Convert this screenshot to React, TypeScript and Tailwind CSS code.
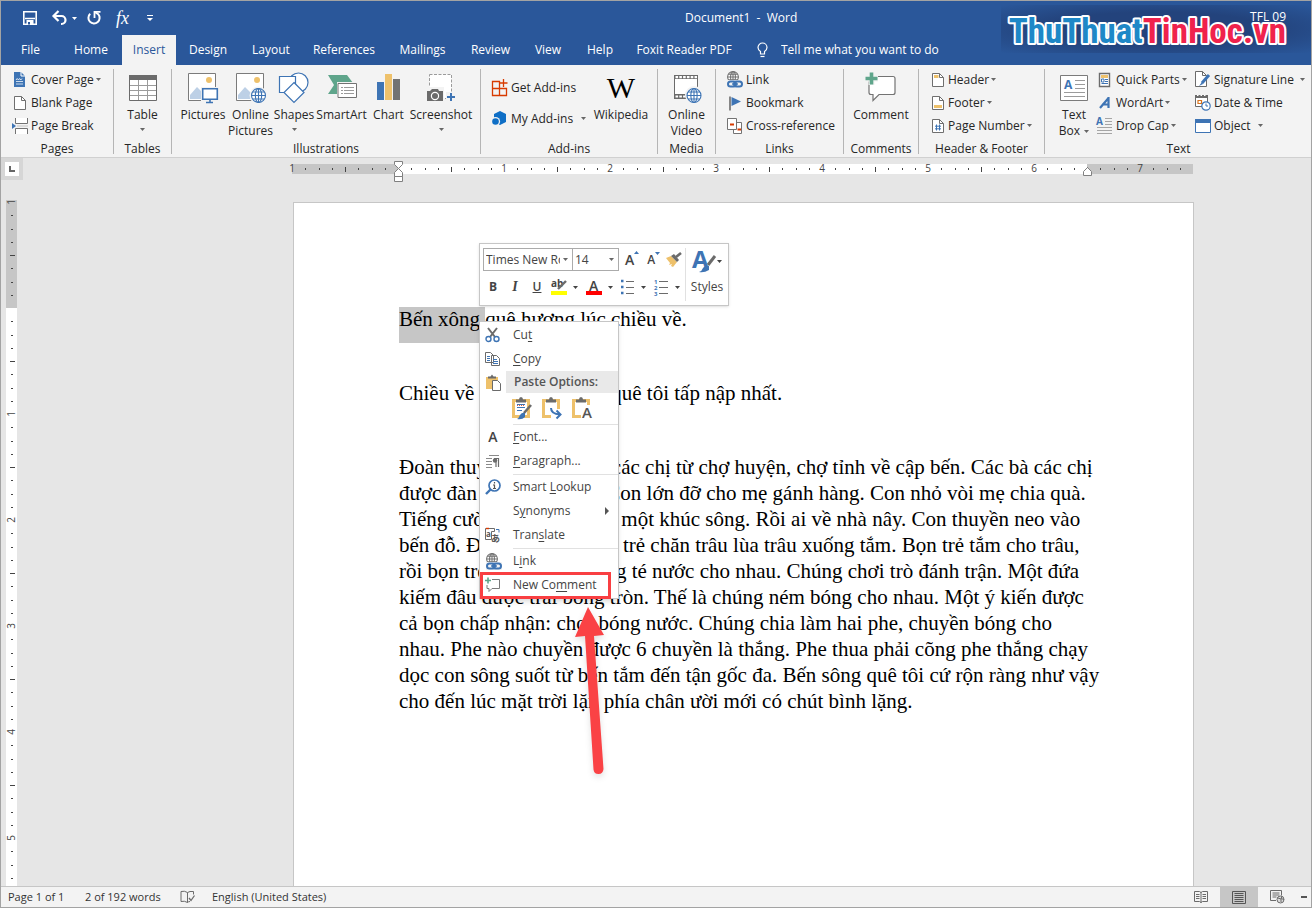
import React from "react";

type IconProps = {
    children: React.ReactNode,
    w: number,
    h: number,
    className?: string
}

const Icon: React.FC<IconProps> = ({children, w, h, className}) => (
    <svg width={w} height={h} viewBox={`0 0 ${w} ${h}`} fill="none" className={"shrink-0 overflow-visible " + (className ?? "")} aria-hidden="true">
        {children}
    </svg>
)

const Caret: React.FC<{className?: string}> = ({className}) => (
    <Icon w={5} h={3} className={className}><path d="M0 0h5L2.5 3z" fill="currentColor"/></Icon>
)

const Globe: React.FC<{x: number, y: number, r: number, color: string}> = ({x, y, r, color}) => (
    <g stroke={color} strokeWidth="1.1">
        <circle cx={x} cy={y} r={r} fill="#fff"/>
        <ellipse cx={x} cy={y} rx={r * 0.45} ry={r}/>
        <path d={`M${x - r} ${y}h${2 * r}M${x} ${y - r}v${2 * r}M${x - r * 0.85} ${y - r * 0.5}h${r * 1.7}M${x - r * 0.85} ${y + r * 0.5}h${r * 1.7}`}/>
    </g>
)

const PageShape: React.FC<{children?: React.ReactNode}> = ({children}) => (
    <Icon w={14} h={16}>
        <path d="M1.500 1.500h7l4 4v9h-11z" fill="#fff" stroke="#6f6f6f"/>
        <path d="M8.500 1.500v4h4" stroke="#6f6f6f"/>
        {children}
    </Icon>
)

const ChainGlobe = () => (
    <Icon w={17} h={17}>
        <Globe x={7} y={6} r={5.4} color="#737373"/>
        <rect x="1" y="9" width="16" height="8" fill="#f3f3f3"/>
        <rect x="2" y="10.5" width="8" height="5" rx="2.5" stroke="#3e74b4" strokeWidth="2"/>
        <rect x="8" y="10.5" width="8" height="5" rx="2.5" stroke="#3e74b4" strokeWidth="2"/>
        <path d="M6 13h6" stroke="#3e74b4" strokeWidth="1.4"/>
    </Icon>
)

const icons = {
    cover: (
        <Icon w={14} h={16}>
            <path d="M1 0h7l4 4v11H1z" fill="#3e74b4"/>
            <path d="M8 0v4h4" stroke="#fff"/>
            <path d="M3 8l1.200-1.500 1.200 1.500 1.200-1.500 1.200 1.500L9 6.500" stroke="#fff" strokeWidth=".8"/>
            <path d="M3 9.500h7M3 12h7" stroke="#dbe6f3" strokeWidth=".9"/>
        </Icon>
    ),
    blank: <PageShape/>,
    pageBreak: (
        <Icon w={16} h={16}>
            <path d="M3.500 0v5.500h12V0M3.500 16v-5.500h12V16" fill="#fff" stroke="#737373"/>
            <path d="M0 5l4 3-4 3z" fill="#3e74b4"/>
            <path d="M5 8h11" stroke="#c4c4c4"/>
        </Icon>
    ),
    table: (
        <Icon w={28} h={26}>
            <path d="M.5.5h27v25H.5z" fill="#fff" stroke="#6b6b6b"/>
            <path d="M0 0h28v5H0z" fill="#6b6b6b"/>
            <path d="M9.500 5v20M18.500 5v20M1 10.500h26M1 15.500h26M1 20.500h26" stroke="#9b9b9b"/>
        </Icon>
    ),
    pictures: (
        <Icon w={32} h={32}>
            <path d="M1.500 1.500h27v27h-27z" fill="#fff" stroke="#7b7b7b"/>
            <circle cx="22" cy="8" r="3" fill="#eec16b"/>
            <path d="M3 27V23l7-8 6 6v6z" fill="#bdd0e6"/>
            <path d="M14 15h18v17H14z" fill="#f3f3f3"/>
            <path d="M15.700 16.700h14.600v10.600H15.700z" fill="#fff" stroke="#3e74b4" strokeWidth="1.600"/>
            <path d="M23 28v2M19 30.500h7" stroke="#3e74b4" strokeWidth="1.600"/>
        </Icon>
    ),
    onlinePictures: (
        <Icon w={32} h={32}>
            <path d="M1.500 1.500h27v27h-27z" fill="#fff" stroke="#7b7b7b"/>
            <circle cx="22" cy="8" r="3" fill="#eec16b"/>
            <path d="M3 27V23l7-8 6 6v6z" fill="#bdd0e6"/>
            <circle cx="23.500" cy="23.500" r="9" fill="#f3f3f3"/>
            <Globe x={23.5} y={23.5} r={7} color="#3e74b4"/>
        </Icon>
    ),
    shapes: (
        <Icon w={32} h={32}>
            <circle cx="20.500" cy="10.500" r="9.500" fill="#fff" stroke="#3e74b4" strokeWidth="1.200"/>
            <path d="M1.500 4.500h16v16h-16z" fill="#fff" stroke="#3e74b4" strokeWidth="1.200"/>
            <path d="M16 10.500L26 20.500 16 30.500 6 20.500z" fill="#fff" stroke="#3e74b4" strokeWidth="1.200"/>
        </Icon>
    ),
    smartArt: (
        <Icon w={32} h={32}>
            <path d="M2 3h19l6 8h-15v11H2l6-9z" fill="#5fa58b"/>
            <path d="M11 10h21v18H11z" fill="#f3f3f3"/>
            <path d="M12 11.500h18.500v14H12z" fill="#fff" stroke="#737373"/>
            <path d="M15 15.500h2M15 18.500h2M15 21.500h2M18 15.500h10M18 18.500h10M18 21.500h10" stroke="#9a9a9a"/>
        </Icon>
    ),
    chart: (
        <Icon w={26} h={32}>
            <path d="M1 10h7v18H1z" fill="#3e74b4"/>
            <path d="M9 2h7v26H9z" fill="#eec16b"/>
            <path d="M17 7h7v21h-7z" fill="#737373"/>
        </Icon>
    ),
    screenshot: (
        <Icon w={32} h={32}>
            <path d="M4.500 2.500h22v24h-22z" fill="#fff" stroke="#9b9b9b" strokeDasharray="3 1.500"/>
            <path d="M1 15h18v15H1z" fill="#f3f3f3"/>
            <path d="M2 19h3l2-2h6l1 2h4v10H2z" fill="#6b6b6b"/>
            <circle cx="10" cy="24" r="3.600" stroke="#fff" strokeWidth="1.200"/>
            <path d="M21 20h10v10H21z" fill="#f3f3f3"/>
            <path d="M26 21v8M22 25h8" stroke="#3e74b4" strokeWidth="2"/>
        </Icon>
    ),
    getAddins: (
        <Icon w={17} h={17}>
            <path d="M1.500 2.500h7v14h-7zM1.500 9.500h14v7h-14z" stroke="#d83b01" strokeWidth="1.300"/>
            <path d="M12.500 0v8M8.500 4h8" stroke="#d83b01" strokeWidth="1.300"/>
        </Icon>
    ),
    myAddins: (
        <Icon w={17} h={17}>
            <path d="M9 1l6 3v8l-6 3-6-3V4z" fill="#0f6fc6"/>
            <circle cx="4.500" cy="11.500" r="4.600" fill="#f3f3f3"/>
            <circle cx="4.500" cy="11.500" r="3.300" fill="#0f6fc6"/>
        </Icon>
    ),
    video: (
        <Icon w={32} h={32}>
            <path d="M3.500 3.500h23v23h-23z" fill="#fff" stroke="#6b6b6b"/>
            <path d="M3 3h24v4H3zM3 22h24v5H3z" fill="#6b6b6b"/>
            <path d="M4.500 5.200h21.500M4.500 24.500h21.500" stroke="#fff" strokeWidth="2.200" strokeDasharray="2.600 1.200"/>
            <circle cx="23" cy="23" r="9" fill="#f3f3f3"/>
            <Globe x={23} y={23.5} r={7} color="#3e74b4"/>
        </Icon>
    ),
    link: <ChainGlobe/>,
    bookmark: (
        <Icon w={17} h={16}>
            <path d="M4 1.500v14" stroke="#6b6b6b" strokeWidth="1.600"/>
            <path d="M5.500 2L15 6.500 5.500 11z" fill="#3e74b4"/>
        </Icon>
    ),
    crossRef: (
        <Icon w={17} h={16}>
            <path d="M1.500.5h9v11h-9zM7.500 4.500h8v11h-8z" fill="#fff" stroke="#737373"/>
            <path d="M2 1h8v10H2z" fill="#fff"/>
            <path d="M4 6.500h4M11.500 11.500H15" stroke="#d83b01" strokeWidth="2"/>
        </Icon>
    ),
    comment: (
        <Icon w={32} h={32}>
            <path d="M5 4.500h23q2 0 2 2v14q0 2-2 2H14l-6 6v-6H6q-2 0-2-2v-14z" fill="#fff" stroke="#737373" strokeWidth="1.200"/>
            <path d="M6.500 0v13M0 6.500h13" stroke="#f3f3f3" strokeWidth="6"/>
            <path d="M6.500.5v12M.5 6.500h12" stroke="#5fa58b" strokeWidth="3.600"/>
        </Icon>
    ),
    header: <PageShape><path d="M3 3h4.500v3H3z" fill="#eec16b"/></PageShape>,
    footer: <PageShape><path d="M3 10h8v3H3z" fill="#eec16b"/></PageShape>,
    pageNumber: <PageShape><path d="M5.500 6.500v6M8.500 6.500v6M4 8.200h6M4 10.800h6" stroke="#3e74b4"/></PageShape>,
    textBox: (
        <Icon w={28} h={26}>
            <path d="M.5.5h27v25H.5z" fill="#fff" stroke="#7b7b7b"/>
            <text x="4" y="14" fontSize="12" fontWeight="700" fontFamily="Open Sans" fill="#3e74b4">A</text>
            <path d="M15 5.500h10M15 9.500h10M15 13.500h10M4 17.500h21M4 21.500h21" stroke="#9b9b9b"/>
        </Icon>
    ),
    quickParts: (
        <Icon w={17} h={16}>
            <path d="M3.500 1.500h10v13h-10z" fill="#fff" stroke="#6b6b6b" strokeWidth="1.400"/>
            <path d="M5 3h7v3H5z" fill="#eec16b"/>
            <path d="M5.500 7h2.500v3H5.500zM9 7.500h3M9 9.500h3M5.500 11.500H12" stroke="#3e74b4"/>
        </Icon>
    ),
    wordArt: (
        <Icon w={17} h={16}>
            <path d="M12.500 2v11M12.500 3L4 13M6 9.500h7" stroke="#3e74b4" strokeWidth="2.200"/>
        </Icon>
    ),
    dropCap: (
        <Icon w={17} h={17}>
            <text x="0" y="8" fontSize="10" fontWeight="700" fontFamily="Open Sans" fill="#3e74b4">A</text>
            <path d="M9 1.500h7M9 4.500h7M9 7.500h7M1 10.500h15M1 13.500h15M1 16.500h15" stroke="#a5a5a5"/>
        </Icon>
    ),
    signature: (
        <Icon w={17} h={17}>
            <path d="M1.500.5h7l4 4v11h-11z" fill="#fff" stroke="#6b6b6b"/>
            <path d="M8.500.5v4h4" stroke="#6b6b6b"/>
            <path d="M15 4L8 12" stroke="#3e74b4" strokeWidth="3"/>
            <path d="M8 11l-3 4 4-2z" fill="#3e74b4"/>
        </Icon>
    ),
    dateTime: (
        <Icon w={17} h={17}>
            <path d="M1.500 2.500h12v10h-12z" fill="#fff" stroke="#6b6b6b"/>
            <path d="M1 1h13v3H1z" fill="#6b6b6b"/>
            <path d="M3 1.500h1.500M6.500 1.500H8M10 1.500h1.500" stroke="#fff"/>
            <path d="M4 6.500h3.500v3H4z" stroke="#d9731c" strokeWidth="1.200"/>
            <circle cx="12" cy="12" r="4.200" fill="#fff" stroke="#3e74b4" strokeWidth="1.200"/>
            <path d="M12 9.500V12h2" stroke="#3e74b4"/>
        </Icon>
    ),
    object: (
        <Icon w={17} h={16}>
            <path d="M1.500 1.500h15v13h-15z" fill="#fff" stroke="#3e74b4"/>
            <path d="M1 1h16v4H1z" fill="#3e74b4"/>
        </Icon>
    )
}

type BigButtonProps = {
    icon: React.ReactNode,
    lines: string[],
    caret?: "below" | "inline",
    className: string
}

const BigButton: React.FC<BigButtonProps> = ({icon, lines, caret, className}) => (
    <button className={"flex flex-col items-center pt-[7px] leading-4 whitespace-nowrap " + className}>
        <span className="flex h-8 items-center justify-center mb-[3px]">{icon}</span>
        {lines.map((line, i) =>
            <span key={line} className="flex items-center gap-1">
                {line}
                {caret === "inline" && i === lines.length - 1 && <Caret className="text-[#666]"/>}
            </span>
        )}
        {caret === "below" && <Caret className="mt-[5px] text-[#666]"/>}
    </button>
)

type SmallButtonProps = {
    icon: React.ReactNode,
    label: string,
    caret?: boolean,
    className?: string,
    caretClass?: string
}

const SmallButton: React.FC<SmallButtonProps> = ({icon, label, caret, className, caretClass}) => (
    <button className={"flex h-[23px] items-center whitespace-nowrap " + (className ?? "")}>
        <span className="flex justify-center mr-[3px]">{icon}</span>
        {label}
        {caret && <Caret className={"text-[#666] " + (caretClass ?? "ml-[2px]")}/>}
    </button>
)

const Group: React.FC<{title: string, className: string, children: React.ReactNode}> = ({title, className, children}) => (
    <section className={"relative flex shrink-0 flex-col " + className} aria-label={title}>
        <div className="flex h-[77px]">{children}</div>
        <div className="text-center leading-4">{title}</div>
    </section>
)

const Divider = () => <div className="mt-1 h-[85px] w-px shrink-0 bg-[#b5b5b5]"/>

const tabs = [
    { name: "File", width: "w-[59px]" },
    { name: "Home", width: "w-[62px]" },
    { name: "Insert", width: "w-[54px]" },
    { name: "Design", width: "w-16" },
    { name: "Layout", width: "w-[62px]" },
    { name: "References", width: "w-[84px]" },
    { name: "Mailings", width: "w-[73px]" },
    { name: "Review", width: "w-[63px]" },
    { name: "View", width: "w-[52px]" },
    { name: "Help", width: "w-[52px]" },
    { name: "Foxit Reader PDF", width: "w-[116px]" }
]

const TitleBar = () => (
    <header className="relative bg-[#2a579a] text-white">
        <div className="flex h-[34px] items-center pl-[21px]">
            <div className="flex w-[663px] items-center">
                <button aria-label="Save" className="mr-[14px]">
                    <Icon w={16} h={16}>
                        <path d="M1.800 1.800h12.400v12.400H1.800z" stroke="#fff" strokeWidth="1.600"/>
                        <path d="M3 8.500h10" stroke="#fff" strokeWidth="1.500"/>
                        <path d="M4.500 15v-5h7v5" fill="#fff"/>
                        <path d="M6 12h2v2.500H6z" fill="#2a579a"/>
                    </Icon>
                </button>
                <button aria-label="Undo" className="mr-1">
                    <Icon w={16} h={16}>
                        <path d="M2 6h7.500a4 4 0 0 1 0 8H9" stroke="#fff" strokeWidth="2.200"/>
                        <path d="M6.500 1L1.500 6l5 5" stroke="#fff" strokeWidth="2.200"/>
                    </Icon>
                </button>
                <Caret className="mr-[9px]"/>
                <button aria-label="Repeat" className="mr-[14px]">
                    <Icon w={16} h={16}>
                        <path d="M4.200 3.800A5.600 5.600 0 1 0 12.200 4.200L9 2" stroke="#fff" strokeWidth="2"/>
                        <path d="M8.500 8V1.800h6" stroke="#fff" strokeWidth="1.800"/>
                    </Icon>
                </button>
                <button aria-label="Equation" className="mr-[18px] font-['Liberation_Serif'] text-lg italic leading-4">fx</button>
                <button aria-label="Customize Quick Access Toolbar">
                    <Icon w={6} h={7}><path d="M0 .5h6" stroke="#fff"/><path d="M0 3h6L3 6z" fill="#fff"/></Icon>
                </button>
            </div>
            <div className="whitespace-pre">Document1  -  Word</div>
            <div className="absolute right-[25px] top-2 z-10 leading-4">TFL 09</div>
        </div>
        <nav className="flex h-[30px] items-stretch">
            {tabs.map(tab =>
                <button key={tab.name} className={"shrink-0 whitespace-nowrap " + tab.width + (tab.name === "Insert" ? " bg-[#f3f3f3] text-[#2a579a]" : "")}>
                    {tab.name}
                </button>
            )}
            <label className="ml-[14px] flex items-center gap-3">
                <Icon w={13} h={16}>
                    <path d="M4.500 12v-2.500C3 8.500 2 7.200 2 5.500a4.500 4.500 0 0 1 9 0c0 1.700-1 3-2.500 4V12z" stroke="#fff" strokeWidth="1.200"/>
                    <path d="M4.500 14.500h4" stroke="#fff" strokeWidth="1.200"/>
                </Icon>
                <input type="text" aria-label="Tell me what you want to do" placeholder="Tell me what you want to do" className="w-[180px] bg-transparent outline-none placeholder:text-white"/>
            </label>
        </nav>
        <div className="absolute right-0 top-[4px] h-12 w-[310px] bg-radial from-[#23437c] from-50% to-transparent to-100%"/>
        <svg className="absolute right-[20px] top-[6px] z-20" width="290" height="46" viewBox="0 0 290 46">
            <text x="285" y="36" textAnchor="end" fontFamily="'Roboto Condensed', Roboto, sans-serif" fontSize="35" fontWeight="700" stroke="#fff" strokeWidth="4" strokeLinejoin="round" paintOrder="stroke">
                <tspan fill="#1e88c7">ThuThuat</tspan><tspan fill="#f0224c">TinHoc.vn</tspan>
            </text>
        </svg>
    </header>
)

const Ribbon = () => (
    <div className="flex h-[93px] shrink-0 overflow-hidden border-b border-[#d0d0d0] bg-[#f3f3f3] text-[#262626]">
        <Group title="Pages" className="w-28">
            <div className="flex flex-col pl-[11px] pt-[3px]">
                <SmallButton icon={<span className="flex w-4 justify-center">{icons.cover}</span>} label="Cover Page" caret/>
                <SmallButton icon={<span className="flex w-4 justify-center">{icons.blank}</span>} label="Blank Page"/>
                <SmallButton icon={icons.pageBreak} label="Page Break"/>
            </div>
        </Group>
        <Divider/>
        <Group title="Tables" className="w-[57px]">
            <BigButton icon={icons.table} lines={["Table"]} caret="below" className="w-full"/>
        </Group>
        <Divider/>
        <Group title="Illustrations" className="w-[308px]">
            <BigButton icon={icons.pictures} lines={["Pictures"]} className="ml-[7px] w-12"/>
            <BigButton icon={icons.onlinePictures} lines={["Online", "Pictures"]} className="w-[47px]"/>
            <BigButton icon={icons.shapes} lines={["Shapes"]} caret="below" className="w-10"/>
            <BigButton icon={icons.smartArt} lines={["SmartArt"]} className="w-[55px]"/>
            <BigButton icon={icons.chart} lines={["Chart"]} className="w-[39px]"/>
            <BigButton icon={icons.screenshot} lines={["Screenshot"]} caret="below" className="w-[66px]"/>
        </Group>
        <Divider/>
        <Group title="Add-ins" className="w-44">
            <div className="flex w-[107px] flex-col gap-2 pl-[10px] pt-[11px]">
                <SmallButton icon={icons.getAddins} label="Get Add-ins"/>
                <SmallButton icon={icons.myAddins} label="My Add-ins" caret caretClass="ml-2"/>
            </div>
            <BigButton icon={<span className="font-['Liberation_Serif'] text-3xl leading-8 text-black">W</span>} lines={["Wikipedia"]} className="w-[66px]"/>
        </Group>
        <Divider/>
        <Group title="Media" className="w-[57px]">
            <BigButton icon={icons.video} lines={["Online", "Video"]} className="w-full"/>
        </Group>
        <Divider/>
        <Group title="Links" className="w-[127px]">
            <div className="flex flex-col pl-[10px] pt-[3px]">
                <SmallButton icon={icons.link} label="Link"/>
                <SmallButton icon={icons.bookmark} label="Bookmark"/>
                <SmallButton icon={icons.crossRef} label="Cross-reference"/>
            </div>
        </Group>
        <Divider/>
        <Group title="Comments" className="w-[74px]">
            <BigButton icon={icons.comment} lines={["Comment"]} className="w-full"/>
        </Group>
        <Divider/>
        <Group title="Header & Footer" className="w-[125px]">
            <div className="flex flex-col pl-3 pt-[3px]">
                <SmallButton icon={icons.header} label="Header" caret/>
                <SmallButton icon={icons.footer} label="Footer" caret/>
                <SmallButton icon={icons.pageNumber} label="Page Number" caret/>
            </div>
        </Group>
        <Divider/>
        <Group title="Text" className="w-[267px]">
            <BigButton icon={icons.textBox} lines={["Text", "Box"]} caret="inline" className="ml-[7px] w-11"/>
            <div className="flex w-[98px] flex-col pt-[3px]">
                <SmallButton icon={icons.quickParts} label="Quick Parts" caret/>
                <SmallButton icon={icons.wordArt} label="WordArt" caret/>
                <SmallButton icon={icons.dropCap} label="Drop Cap" caret/>
            </div>
            <div className="flex flex-col pt-[3px]">
                <SmallButton icon={icons.signature} label="Signature Line" caret caretClass="ml-[6px]"/>
                <SmallButton icon={icons.dateTime} label="Date & Time"/>
                <SmallButton icon={icons.object} label="Object" caret caretClass="ml-2"/>
            </div>
        </Group>
    </div>
)

// 106 units per inch, one mark each eighth
const INCH = 106;

const Ticks: React.FC<{from: number, to: number, vertical?: boolean}> = ({from, to, vertical}) => {
    const marks = [];
    for (let i = from; i <= to; i++) {
        const pos = Math.round((i * INCH) / 8) + INCH;
        if (i === 0) continue;
        if (i % 8 === 0) {
            marks.push(
                <text key={i} x={vertical ? 0 : pos} y={vertical ? 0 : 9} fontSize="10" fill="#444" textAnchor="middle" transform={vertical ? `translate(9 ${pos}) rotate(-90)` : undefined}>
                    {Math.abs(i / 8)}
                </text>
            );
        } else {
            const half = i % 4 === 0;
            marks.push(vertical
                ? <rect key={i} x={half ? 4 : 5} y={pos} width={half ? 5 : 2} height="1" fill="#444"/>
                : <rect key={i} x={pos} y={half ? 4 : 5} width="1" height={half ? 5 : 2} fill="#444"/>
            );
        }
    }
    return <g>{marks}</g>;
}

const HorizontalRuler = () => (
    <svg width="902" height="22" viewBox="0 0 902 22" className="shrink-0 overflow-visible">
        <path d="M0 2h106v10H0zM795 2h106v10H795z" fill="#c6c6c6"/>
        <path d="M106 2h689v10H106z" fill="#fff"/>
        <g transform="translate(0 1)"><Ticks from={-8} to={59}/></g>
        <g fill="#fff" stroke="#808080">
            <path d="M102.500-.5h8v3l-4 4-4-4zM102.500 14.500v-4l4-4 4 4v4zM102.500 14.500h8v5h-8z"/>
            <path d="M791.500 13.500v-4l4-4 4 4v4z"/>
        </g>
    </svg>
)

const VerticalRuler = () => (
    <svg width="12" height="760" viewBox="0 0 12 760" className="shrink-0 overflow-visible">
        <path d="M0-2h11v108H0z" fill="#c6c6c6"/>
        <path d="M0 106h11v654H0z" fill="#fff"/>
        <Ticks from={-8} to={48} vertical/>
    </svg>
)

const bodyLines = [
    "Đoàn thuyền chở các bà, các chị từ chợ huyện, chợ tỉnh về cập bến. Các bà các chị",
    "được đàn con ùa ra đón. Con lớn đỡ cho mẹ gánh hàng. Con nhỏ vòi mẹ chia quà.",
    "Tiếng cười nói râm ran cả một khúc sông. Rồi ai về nhà nây. Con thuyền neo vào",
    "bến đỗ. Đến chiều, cả bọn trẻ chăn trâu lùa trâu xuống tắm. Bọn trẻ tắm cho trâu,",
    "rồi bọn trẻ con lại vui cùng té nước cho nhau. Chúng chơi trò đánh trận. Một đứa",
    "kiếm đâu được trái bóng tròn. Thế là chúng ném bóng cho nhau. Một ý kiến được",
    "cả bọn chấp nhận: chơi bóng nước. Chúng chia làm hai phe, chuyền bóng cho",
    "nhau. Phe nào chuyền được 6 chuyền là thắng. Phe thua phải cõng phe thắng chạy",
    "dọc con sông suốt từ bến tắm đến tận gốc đa. Bến sông quê tôi cứ rộn ràng như vậy",
    "cho đến lúc mặt trời lặn phía chân ười mới có chút bình lặng."
]

const MiniToolbar = () => (
    <div className="absolute left-[185px] top-[40px] flex h-[63px] w-[250px] border border-[#c6c6c6] bg-white text-[#444] shadow-sm">
        <div className="w-[206px] border-r border-[#e1e1e1] my-1 pl-[3px]">
            <div className="flex items-center">
                <div className="relative">
                    <select aria-label="Font" className="h-[23px] w-[90px] appearance-none overflow-hidden border border-[#ababab] pl-[2px] pr-3">
                        <option>Times New Roman</option>
                    </select>
                    <Caret className="pointer-events-none absolute right-[5px] top-[10px] text-[#666]"/>
                </div>
                <div className="relative">
                    <select aria-label="Font Size" className="-ml-px h-[23px] w-[47px] appearance-none border border-[#ababab] pl-[2px]">
                        <option>14</option>
                    </select>
                    <Caret className="pointer-events-none absolute right-[5px] top-[10px] text-[#666]"/>
                </div>
                <button aria-label="Grow Font" className="ml-[6px] flex text-sm font-semibold">A<Icon w={5} h={4}><path d="M0 4l2.500-3L5 4z" fill="#3e74b4"/></Icon></button>
                <button aria-label="Shrink Font" className="ml-2 flex font-semibold">A<Icon w={5} h={4}><path d="M0 0h5L2.500 3z" fill="#3e74b4"/></Icon></button>
                <button aria-label="Format Painter" className="ml-[6px]">
                    <Icon w={16} h={16}>
                        <path d="M0 6l5-2 6 6-4 5-2-1 1-2-3 1 1-2z" fill="#eec16b"/>
                        <path d="M5 4l3-2 5 6-2 2z" fill="#6b6b6b"/>
                        <path d="M10 5l5-4" stroke="#6b6b6b" strokeWidth="2.600"/>
                    </Icon>
                </button>
            </div>
            <div className="flex h-8 items-center text-[#444]">
                <button aria-label="Bold" className="w-5 font-bold">B</button>
                <button aria-label="Italic" className="ml-[2px] w-5 font-['Liberation_Serif'] text-sm font-bold italic">I</button>
                <button aria-label="Underline" className="ml-[2px] w-5 font-semibold underline">U</button>
                <button aria-label="Text Highlight Color" className="ml-1">
                    <Icon w={18} h={16}>
                        <text x="0" y="8" fontSize="10" fontWeight="700" fill="#444">ab</text>
                        <path d="M15 2L7 10" stroke="#6b6b6b" strokeWidth="2.400"/>
                        <path d="M0 12h16v4H0z" fill="#ff0"/>
                    </Icon>
                </button>
                <Caret className="ml-1"/>
                <button aria-label="Font Color" className="ml-2">
                    <Icon w={16} h={16}>
                        <text x="3" y="12" fontSize="14" fontWeight="600" fill="#444">A</text>
                        <path d="M0 12h16v4H0z" fill="#f00"/>
                    </Icon>
                </button>
                <Caret className="ml-[6px]"/>
                <button aria-label="Bullets" className="ml-2">
                    <Icon w={14} h={16}>
                        <path d="M0 2h2.500M0 8h2.500M0 14h2.500" stroke="#3e74b4" strokeWidth="2.500"/>
                        <path d="M5 2.500h8M5 8.500h8M5 14.500h8" stroke="#6b6b6b"/>
                    </Icon>
                </button>
                <Caret className="ml-[6px]"/>
                <button aria-label="Numbering" className="ml-2">
                    <Icon w={15} h={17}>
                        <g fontSize="6" fontWeight="700" fill="#3e74b4"><text x="0" y="5">1</text><text x="0" y="11">2</text><text x="0" y="17">3</text></g>
                        <path d="M5 2.500h9M5 8.500h9M5 14.500h9" stroke="#6b6b6b"/>
                    </Icon>
                </button>
                <Caret className="ml-[6px]"/>
            </div>
        </div>
        <button className="flex flex-1 flex-col items-center pt-[5px] leading-4">
            <span className="flex items-center">
                <Icon w={25} h={24}>
                    <text x="0" y="19" fontSize="24" fontWeight="700" fill="#3e74b4">A</text>
                    <path d="M23 7l-7 9" stroke="#6b6b6b" strokeWidth="3"/>
                    <path d="M7 23q5 1 10-2v-4q-4-1-6 2-1 3-4 4z" fill="#3e74b4"/>
                </Icon>
                <Caret/>
            </span>
            <span className="mt-[6px]">Styles</span>
        </button>
    </div>
)

const pasteIcon = (extra: React.ReactNode) => (
    <Icon w={22} h={24}>
        <path d="M2.500 4.500h15v16h-15z" fill="#fff" stroke="#eec16b" strokeWidth="3"/>
        <path d="M5 6.500V3.500h3q0-2.500 2-2.500t2 2.500h3v3z" fill="#6b6b6b"/>
        {extra}
    </Icon>
)

const copyIcon = (
    <Icon w={16} h={16}>
        <path d="M.5 1.500h5l3 3v7h-8zM6.500 4.500h5l3 3v7h-8z" fill="#fff" stroke="#6b6b6b"/>
        <path d="M2 5.500h3M2 7.500h3M2 9.500h3M8 8.500h4M8 10.500h5M8 12.500h5" stroke="#3e74b4"/>
    </Icon>
)

const MenuItem: React.FC<{icon?: React.ReactNode, label: [string, string, string], children?: React.ReactNode}> = ({icon, label, children}) => (
    <button role="menuitem" className="flex h-6 w-full items-center whitespace-nowrap text-left">
        <span className="flex w-[33px] shrink-0 pl-[5px]">{icon}</span>
        <span>{label[0]}<u className="underline-offset-2">{label[1]}</u>{label[2]}</span>
        {children}
    </button>
)

const MenuLine = () => <div className="ml-[33px] mt-px h-px bg-[#e1e1e1]"/>

const ContextMenu = () => (
    <div role="menu" className="absolute left-[185px] top-[118px] w-[140px] border border-[#c6c6c6] bg-white pb-px pt-px text-[#444] shadow-md">
        <MenuItem label={["Cu", "t", ""]} icon={
            <Icon w={16} h={16}>
                <path d="M3 1l7 9M12 1L5 10" stroke="#6b6b6b" strokeWidth="2"/>
                <circle cx="3.500" cy="12" r="2.500" stroke="#3e74b4" strokeWidth="1.400"/>
                <circle cx="11.500" cy="12" r="2.500" stroke="#3e74b4" strokeWidth="1.400"/>
            </Icon>
        }/>
        <MenuItem label={["", "C", "opy"]} icon={copyIcon}/>
        <div className="flex h-[22px] items-center">
            <span className="flex w-[26px] pl-[5px]">
                <Icon w={16} h={17}>
                    <path d="M2 4h10v10H2z" fill="#eec16b" stroke="#eec16b" strokeWidth="2"/>
                    <path d="M3 4.500v-2h2.500L7 .5l1.500 2H11v2z" fill="#6b6b6b"/>
                    <path d="M7.500 6.500h5l3 3v7h-8z" fill="#fff" stroke="#6b6b6b"/>
                </Icon>
            </span>
            <span className="flex-1 bg-[#e9e9e9] pl-2 font-semibold leading-[22px] text-[#555]">Paste Options:</span>
        </div>
        <div className="flex h-[30px] items-center gap-2 pl-[31px]">
            <button aria-label="Keep Source Formatting">{pasteIcon(
                <>
                    <path d="M6 8.500h8M6 11.500h8M6 14.500h5" stroke="#3e74b4" strokeWidth="1.200"/>
                    <path d="M6 9.500h8" stroke="#e05a3c" strokeDasharray="1 1"/>
                    <path d="M20 9l-7 8" stroke="#6b6b6b" strokeWidth="2.600"/>
                    <path d="M6 23q5 1 8-2v-4q-3-1-5 2-1 3-3 4z" fill="#3e74b4"/>
                </>
            )}</button>
            <button aria-label="Merge Formatting">{pasteIcon(
                <>
                    <path d="M10 13h11v11H10z" fill="#fff"/>
                    <path d="M10 12q0 6 9 6.500M15.500 14.500l4 4-4 4" stroke="#3e74b4" strokeWidth="2"/>
                </>
            )}</button>
            <button aria-label="Keep Text Only">{pasteIcon(
                <>
                    <path d="M10 9h12v15H10z" fill="#fff"/>
                    <text x="11" y="22" fontSize="15" fontWeight="600" fill="#555">A</text>
                </>
            )}</button>
        </div>
        <MenuLine/>
        <MenuItem label={["", "F", "ont..."]} icon={<span className="w-4 text-center text-sm font-semibold leading-4">A</span>}/>
        <MenuItem label={["", "P", "aragraph..."]} icon={
            <Icon w={16} h={16}>
                <path d="M4 2.500h10M1 5.500h6M1 8.500h6M1 11.500h6M1 14.500h6" stroke="#8a8a8a"/>
                <path d="M11 5v9M13.500 5v9M9 5.500h5" stroke="#6b6b6b" strokeWidth="1.200"/>
                <circle cx="10" cy="7.500" r="2.200" fill="#6b6b6b"/>
            </Icon>
        }/>
        <MenuLine/>
        <MenuItem label={["Smart ", "L", "ookup"]} icon={
            <Icon w={16} h={16}>
                <circle cx="9.500" cy="6.500" r="5.500" stroke="#3e74b4" strokeWidth="1.700"/>
                <path d="M5.500 10.500L1 15" stroke="#3e74b4" strokeWidth="2.400"/>
                <path d="M9.500 3v1.500M8 6h1.500v3.500M8 9.500h3" stroke="#555" strokeWidth="1.200"/>
            </Icon>
        }/>
        <MenuItem label={["S", "y", "nonyms"]}>
            <Icon w={4} h={8} className="ml-auto mr-[9px]"><path d="M0 0l4 4-4 4z" fill="#555"/></Icon>
        </MenuItem>
        <MenuItem label={["Tran", "s", "late"]} icon={
            <Icon w={16} h={16}>
                <path d="M9.500 1.500h-9v11h6v-8h3z" fill="#fff" stroke="#6b6b6b"/>
                <path d="M1 1.500h3" stroke="#d83b01" strokeWidth="1.400"/>
                <text x="1" y="10" fontSize="8" fontWeight="700" fill="#555">a</text>
                <text x="6" y="15" fontSize="9" fontWeight="700" fontFamily="Noto Sans CJK JP" fill="#555">あ</text>
                <path d="M11 2.500h3v3" stroke="#3e74b4"/>
            </Icon>
        }/>
        <MenuLine/>
        <MenuItem label={["L", "i", "nk"]} icon={<ChainGlobe/>}/>
        <MenuItem label={["New Co", "m", "ment"]} icon={
            <Icon w={16} h={16}>
                <path d="M7 2.500h7.500v9H7l-3 3v-3H2V8" stroke="#7b7b7b"/>
                <path d="M3 .5v6M0 3.500h6" stroke="#5fa58b" strokeWidth="1.600"/>
            </Icon>
        }/>
        <div className="pointer-events-none absolute -bottom-px left-0 h-[27px] w-[131px] border-3 border-[#f93f42]"/>
    </div>
)

const Arrow = () => (
    <svg className="pointer-events-none absolute left-[276px] top-[400px] drop-shadow-md" width="40" height="175" viewBox="0 0 40 175" aria-hidden="true">
        <path d="M18 4L34 32l-10 1 9.500 133q-.5 5-5 5t-5-4.500L15 33l-10 1z" fill="#fa4245"/>
    </svg>
)

const StatusBar = () => (
    <footer className="flex h-[21px] shrink-0 items-center border-t border-[#c6c6c6] bg-[#f3f3f3] pl-[7px] text-[11px] text-[#333]">
        <span className="w-[77px]">Page 1 of 1</span>
        <span className="w-[95px]">2 of 192 words</span>
        <Icon w={15} h={14}>
            <path d="M7.500 2.500q-3-2-6.500-1v10q3.500-1 6.500 1zM7.500 2.500q2-1.500 6-1v3M7.500 12.500q1-1 2.500-1" stroke="#6b6b6b"/>
            <path d="M9 8l2 2.500 3.500-5" stroke="#6b6b6b" strokeWidth="1.300"/>
        </Icon>
        <span className="ml-[17px]">English (United States)</span>
        <div className="ml-auto flex h-full items-center">
            <button aria-label="Read Mode" className="flex w-[38px] justify-center">
                <Icon w={14} h={14}>
                    <path d="M.5 1.500h5l1.500 1 1.500-1h5v10h-5l-1.500 1-1.500-1h-5zM7 2v11" stroke="#6b6b6b"/>
                    <path d="M2 4.500h3.500M2 6.500h3.500M2 8.500h3.500M8.500 4.500H12M8.500 6.500H12M8.500 8.500H12" stroke="#6b6b6b"/>
                </Icon>
            </button>
            <button aria-label="Print Layout" className="flex h-full w-[38px] items-center justify-center bg-[#c6c6c6]">
                <Icon w={14} h={13}>
                    <path d="M.5.5h13v12H.5z" stroke="#555"/>
                    <path d="M2.500 2.500h9M2.500 4.500h9M2.500 6.500h9M2.500 8.500h9M2.500 10.500h9" stroke="#555"/>
                </Icon>
            </button>
            <button aria-label="Web Layout" className="flex w-[38px] justify-center">
                <Icon w={15} h={14}>
                    <path d="M6 10.500H.5V.5h11v5" stroke="#6b6b6b"/>
                    <path d="M2.500 3h7M2.500 5h7M2.500 7h4" stroke="#6b6b6b"/>
                    <circle cx="10.500" cy="9.500" r="3.500" fill="#ddd" stroke="#6b6b6b"/>
                    <path d="M8 8l3 1v3M12 6.500l-1 2 3 1" stroke="#6b6b6b"/>
                </Icon>
            </button>
            <button aria-label="Zoom Out" className="ml-[5px] mr-1">
                <Icon w={6} h={2}><path d="M0 0h6v2H0z" fill="#555"/></Icon>
            </button>
        </div>
    </footer>
)

const App = () => (
    <div className="flex h-screen flex-col overflow-hidden border border-[#a3a3a3] bg-[#e6e6e6] font-['Open_Sans','Noto_Sans',sans-serif] text-xs">
        <TitleBar/>
        <Ribbon/>
        <main className="flex min-h-0 flex-1 flex-col overflow-hidden">
            <div className="flex h-11 shrink-0 items-start">
                <div className="flex w-[291px] shrink-0">
                    <button aria-label="Tab Selector" className="flex h-[22px] w-[22px] items-center justify-center border-4 border-[#d6d6d6] bg-white">
                        <Icon w={6} h={6}><path d="M1 0v5h5" stroke="#666" strokeWidth="2"/></Icon>
                    </button>
                </div>
                <div className="pt-[4px]"><HorizontalRuler/></div>
            </div>
            <div className="flex min-h-0 flex-1">
                <div className="w-[292px] shrink-0 pl-[5px]"><VerticalRuler/></div>
                <article className="relative w-[901px] shrink-0 border border-b-0 border-[#c6c6c6] bg-white pl-[105px] pt-[103px] font-['Liberation_Serif',serif] text-[21px] leading-[26px] text-black">
                    <p className="mb-12 whitespace-nowrap"><span className="bg-[#c6c6c6] pb-3">Bến xông </span>quê hương lúc chiều về.</p>
                    <p className="mb-12 whitespace-nowrap">Chiều về là lúc bến sông quê tôi tấp nập nhất.</p>
                    <p className="whitespace-nowrap">
                        {bodyLines.map(line =>
                            <React.Fragment key={line}>{line}<br/></React.Fragment>
                        )}
                    </p>
                    <div className="font-['Open_Sans','Noto_Sans',sans-serif] text-xs">
                        <MiniToolbar/>
                        <ContextMenu/>
                        <Arrow/>
                    </div>
                </article>
            </div>
        </main>
        <StatusBar/>
    </div>
)

export default App;
